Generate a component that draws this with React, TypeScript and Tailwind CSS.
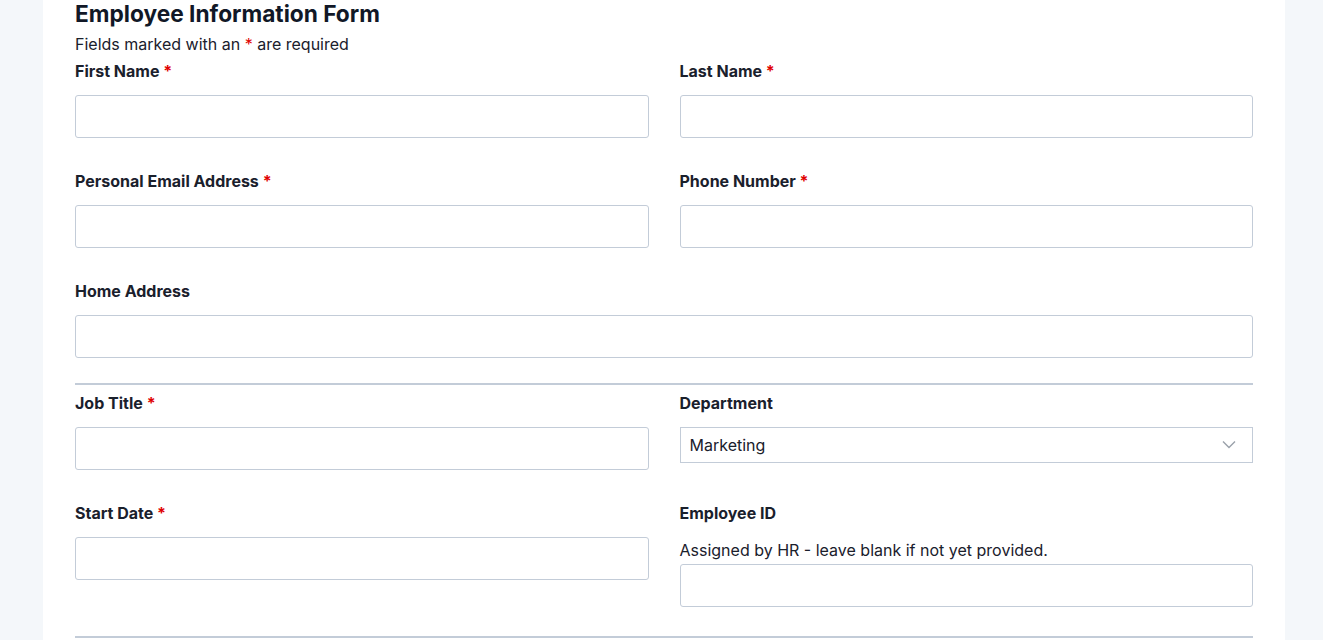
const Req = () => <span className="text-[#e00000]">*</span>;

const Label = ({ children, required }: { children: React.ReactNode; required?: boolean }) => (
  <label className="block text-[16px] leading-6 font-bold text-[#1a202c]">
    {children} {required && <Req />}
  </label>
);

const Input = () => (
  <input
    type="text"
    className="mt-3 block h-[43px] w-full rounded-[3px] border border-[#c3ccd8] bg-white px-3 text-[16px] outline-none"
  />
);

const Field = ({ label, required }: { label: string; required?: boolean }) => (
  <div>
    <Label required={required}>{label}</Label>
    <Input />
  </div>
);

const App = () => {
  return (
    <div
      className="min-h-screen bg-[#f4f7fa] pl-[43px] text-[#1a202c]"
      style={{ fontFamily: 'Inter, "Noto Sans", sans-serif' }}
    >
      <div className="min-h-[640px] w-[1242px] bg-white px-8">
        <h1 className="text-[22.7px] leading-7 font-bold text-[#111827]">Employee Information Form</h1>
        <p className="mt-1 text-[16px] leading-6 text-[#1a202c]">
          Fields marked with an <Req /> are required
        </p>

        <div className="mt-[3px] grid grid-cols-2 gap-x-[31px] gap-y-[31px]">
          <Field label="First Name" required />
          <Field label="Last Name" required />
          <Field label="Personal Email Address" required />
          <Field label="Phone Number" required />
          <div className="col-span-2">
            <Field label="Home Address" />
          </div>
        </div>

        <hr className="mt-[25px] border-t-2 border-[#c3ccd8]" />

        <div className="mt-[6px] grid grid-cols-2 gap-x-[31px] gap-y-[31px]">
          <Field label="Job Title" required />
          <div>
            <Label>Department</Label>
            <div className="relative mt-3">
              <select
                defaultValue="Marketing"
                className="block h-[36px] w-full appearance-none border border-[#c3ccd8] bg-white px-[9px] text-[16px] text-[#1a202c] outline-none"
              >
                <option>Engineering</option>
                <option>Marketing</option>
                <option>Sales</option>
                <option>Human Resources</option>
                <option>Finance</option>
              </select>
              <svg
                className="pointer-events-none absolute right-[17px] top-[13px]"
                width="14"
                height="9"
                viewBox="0 0 14 9"
                fill="none"
              >
                <path d="M1 1.5l6 6 6-6" stroke="#9aa1aa" strokeWidth="1.4" />
              </svg>
            </div>
          </div>
          <Field label="Start Date" required />
          <div>
            <Label>Employee ID</Label>
            <p className="mt-[13px] text-[16px] leading-6 text-[#1a202c]">
              Assigned by HR - leave blank if not yet provided.
            </p>
            <input
              type="text"
              className="mt-[2px] block h-[43px] w-full rounded-[3px] border border-[#c3ccd8] bg-white px-3 text-[16px] outline-none"
            />
          </div>
        </div>

        <hr className="mt-[29px] border-t-2 border-[#c3ccd8]" />
      </div>
    </div>
  );
};

export default App;
